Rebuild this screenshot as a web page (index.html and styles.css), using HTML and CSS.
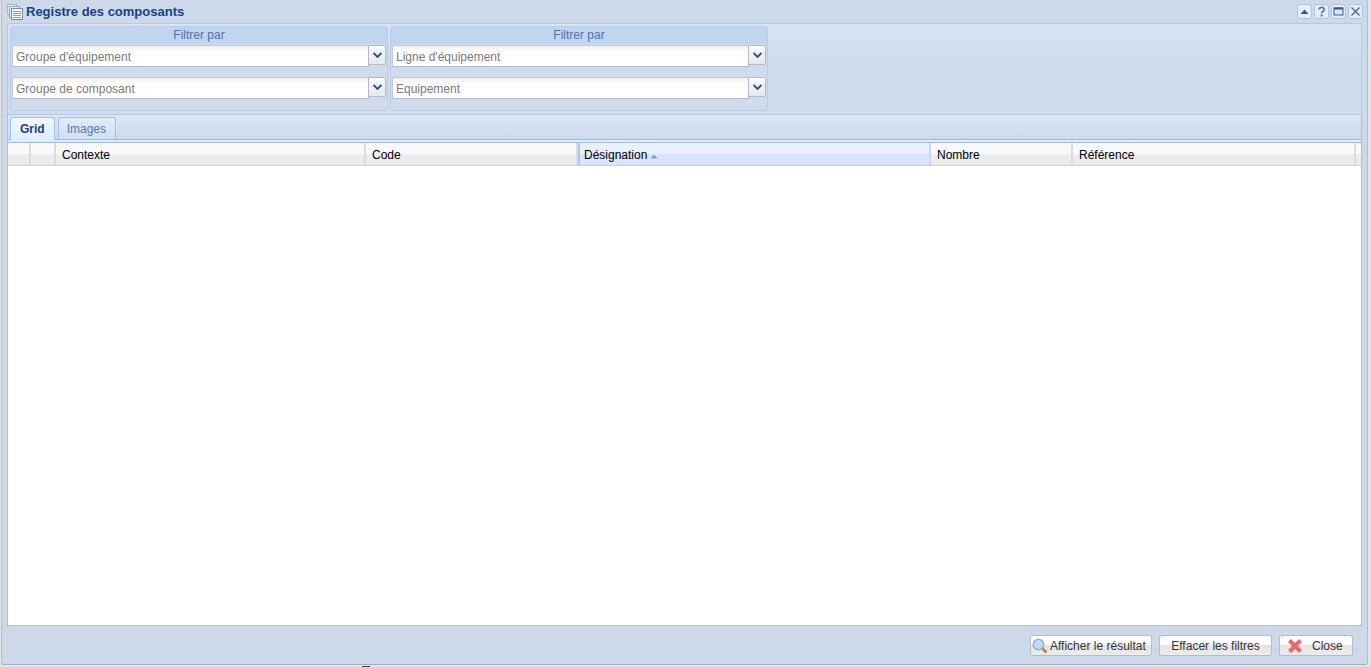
FILE: index.html
```html
<!DOCTYPE html>
<html lang="fr">
<head>
    <meta charset="UTF-8">
    <title>Registre des composants</title>
    <link rel="stylesheet" href="styles.css">
</head>
<body>
    <div class="window">
        <div class="window-title">
            <svg class="title-icon" viewBox="0 0 16 16">
                <rect x="0.5" y="0.5" width="9" height="10" fill="#dbe7f6" stroke="#9fb6d6"/>
                <rect x="2.5" y="2.5" width="10" height="11" fill="#e6eef9" stroke="#8fa9cf"/>
                <rect x="4.5" y="4.5" width="11" height="11" fill="#fff" stroke="#6d8fbd"/>
                <path d="M6 7.5h8M6 9.5h8M6 11.5h8M6 13.5h8" stroke="#7fa0cc"/>
            </svg>
            <span class="title-text">Registre des composants</span>
            <div class="title-tools">
                <button class="tool"><svg viewBox="0 0 13 13"><path d="M2.5 9L6.5 4.5 10.5 9z" fill="#2f55a4"/></svg></button>
                <button class="tool"><svg viewBox="0 0 13 13"><path d="M4 4.5C4 1.7 9.2 1.7 9.2 4.6 9.2 6.4 6.7 6.4 6.7 8.2" fill="none" stroke="#5c7fb5" stroke-width="1.9"/><rect x="5.6" y="9.3" width="2.2" height="2.2" fill="#5c7fb5"/></svg></button>
                <button class="tool"><svg viewBox="0 0 13 13"><rect x="2" y="3" width="9" height="7" fill="#dbe7f6" stroke="#2f55a4"/><path d="M2 3.5h9" stroke="#2f55a4" stroke-width="2"/></svg></button>
                <button class="tool"><svg viewBox="0 0 13 13"><path d="M2.5 2.5l8 8M10.5 2.5l-8 8" stroke="#3f63a8" stroke-width="1.3"/></svg></button>
            </div>
        </div>

        <div class="window-body">
            <div class="filters">
                <div class="filter-group">
                    <div class="filter-title">Filtrer par</div>
                    <div class="combo"><div class="combo-input">Groupe d'équipement</div><div class="combo-btn"><svg viewBox="0 0 9 6"><path d="M0.5 1L4.5 5 8.5 1" fill="none" stroke="#2d4a85" stroke-width="1.8"/></svg></div></div>
                    <div class="combo"><div class="combo-input">Groupe de composant</div><div class="combo-btn"><svg viewBox="0 0 9 6"><path d="M0.5 1L4.5 5 8.5 1" fill="none" stroke="#2d4a85" stroke-width="1.8"/></svg></div></div>
                </div>
                <div class="filter-group">
                    <div class="filter-title">Filtrer par</div>
                    <div class="combo"><div class="combo-input">Ligne d'équipement</div><div class="combo-btn"><svg viewBox="0 0 9 6"><path d="M0.5 1L4.5 5 8.5 1" fill="none" stroke="#2d4a85" stroke-width="1.8"/></svg></div></div>
                    <div class="combo"><div class="combo-input">Equipement</div><div class="combo-btn"><svg viewBox="0 0 9 6"><path d="M0.5 1L4.5 5 8.5 1" fill="none" stroke="#2d4a85" stroke-width="1.8"/></svg></div></div>
                </div>
            </div>

            <div class="tabs-panel">
                <div class="tabs">
                    <div class="tab active">Grid</div>
                    <div class="tab">Images</div>
                </div>
                <div class="tab-strip"></div>
                <div class="grid">
                    <div class="grid-head">
                        <div class="col col-a"></div>
                        <div class="col col-b"></div>
                        <div class="col col-context">Contexte</div>
                        <div class="col col-code">Code</div>
                        <div class="col col-name sorted">Désignation <svg viewBox="0 0 8 5"><path d="M0.5 4.5L4 0.5 7.5 4.5z" fill="#7f9fd0"/></svg></div>
                        <div class="col col-count">Nombre</div>
                        <div class="col col-ref">Référence</div>
                    </div>
                    <div class="grid-rows"></div>
                </div>
            </div>

            <div class="window-footer">
                <button class="btn btn-search">
                    <svg viewBox="0 0 16 16"><circle cx="6.5" cy="6.5" r="5.2" fill="#c4dcf8" stroke="#8fb4e0" stroke-width="1.6"/><path d="M10.5 10.5L14.5 14.5" stroke="#c4873f" stroke-width="2.8"/></svg>
                    Afficher le résultat
                </button>
                <button class="btn btn-plain">Effacer les filtres</button>
                <button class="btn btn-close">
                    <svg viewBox="0 0 16 16"><path d="M2.5 2.5L13.5 13.5M13.5 2.5L2.5 13.5" stroke="#f0646a" stroke-width="4.2"/></svg>
                    Close
                </button>
            </div>
        </div>
    </div>
    <div class="behind"></div>
</body>
</html>
```

FILE: styles.css
```css
* {
    box-sizing: border-box;
}
html, body {
    height: 100%;
}
body {
    position: relative;
    margin: 0;
    font-family: "Liberation Sans", Arial, sans-serif;
    font-size: 12px;
    background-color: #e4e4e4;
    overflow: hidden;
}
.window {
    display: flex;
    flex-direction: column;
    height: 665px;
    width: 1367px;
    margin-left: 1px;
    background-color: #cdd9e8;
    border: 1px solid #a9c0e4;
    border-top: 0;
    border-bottom: 1px solid #9fb0c8;
    border-radius: 0 0 3px 3px;
}
.window-title {
    display: flex;
    align-items: center;
    height: 23px;
    padding: 0 4px 0 5px;
    background: #cdd9e8;
}
.title-icon {
    width: 16px;
    height: 16px;
    margin-right: 3px;
}
.title-text {
    font-size: 13px;
    font-weight: bold;
    color: #15428b;
}
.title-tools {
    display: flex;
    gap: 2px;
    margin-left: auto;
}
.tool {
    width: 15px;
    height: 15px;
    padding: 0;
    border: 1px solid #a8c5ee;
    border-radius: 3px;
    background: #e6eefa;
}
.tool svg {
    display: block;
    width: 13px;
    height: 13px;
}
.window-body {
    flex: 1;
    display: flex;
    flex-direction: column;
    padding: 0 5px;
    min-height: 0;
}
.filters {
    display: flex;
    gap: 2px;
    height: 91px;
    padding: 2px 2px;
    background: linear-gradient(to bottom, #d9e5f5, #cddcee 40%, #cfdcec);
    border: 1px solid #b5c9e4;
    border-bottom: 0;
    border-radius: 3px 3px 0 0;
}
.filter-group {
    width: 378px;
    height: 85px;
    padding: 0 1px;
    background: #cfdcec;
    border: 1px solid #b9cde8;
    border-radius: 3px;
}
.filter-title {
    margin: 0 -1px;
    height: 17px;
    line-height: 16px;
    text-align: center;
    color: #5270ad;
    background: #c0d6ef;
}
.combo {
    display: flex;
    height: 22px;
    margin-top: 1px;
}
.combo + .combo {
    margin-top: 10px;
}
.combo-input {
    flex: 1;
    padding-left: 3px;
    line-height: 22px;
    color: #7a7a7a;
    background: linear-gradient(to bottom, #f0f0f0, #fff 6px);
    border: 1px solid #b5b8c8;
    border-left-color: #c4c8d8;
    border-top-color: #c4c8d8;
}
.combo-btn {
    display: flex;
    align-items: center;
    justify-content: center;
    width: 17px;
    height: 20px;
    background: linear-gradient(to bottom, #fbfbfb, #e6e8ec);
    border: 1px solid #b5b8c8;
    border-left: 0;
    border-radius: 0 2px 2px 0;
}
.combo-btn svg {
    width: 9px;
    height: 6px;
}
.tabs-panel {
    flex: 1;
    display: flex;
    flex-direction: column;
    min-height: 0;
    border: 1px solid #a3c0ea;
    border-top: 0;
}
.tabs {
    display: flex;
    gap: 3px;
    flex: none;
    height: 26px;
    padding: 2px 0 0 2px;
    background: linear-gradient(to bottom, #dae6f6, #cbdbef);
    border-top: 1px solid #b5c9e4;
    border-bottom: 1px solid #99bbe8;
}
.tab {
    height: 22px;
    padding: 0 9px 0 8px;
    line-height: 23px;
    color: #5878a8;
    background: linear-gradient(to bottom, #e2ecf9, #cfdff2);
    border: 1px solid #a3c0ea;
    border-bottom: 0;
    border-radius: 3px 3px 0 0;
}
.tab.active {
    height: 23px;
    padding: 0 9px;
    font-weight: bold;
    color: #15428b;
    background: linear-gradient(to bottom, #f3f8fe, #deecfd);
}
.tab-strip {
    flex: none;
    height: 3px;
    background: #deecfd;
    border-bottom: 1px solid #99bbe8;
}
.grid {
    flex: 1;
    display: flex;
    flex-direction: column;
    min-height: 0;
    background: #fff;
}
.grid-head {
    display: flex;
    height: 23px;
    background: linear-gradient(to bottom, #f9f9f9 50%, #efefef 50%, #e9e9e9);
    border-bottom: 1px solid #d0d0d0;
}
.col {
    display: flex;
    align-items: center;
    gap: 3px;
    padding: 2px 0 0 6px;
    color: #000;
    border-right: 2px solid #dcdcdc;
}
.col svg {
    width: 8px;
    height: 5px;
    margin-top: 2px;
}
.col-a { width: 23px; }
.col-b { width: 25px; }
.col-context { width: 310px; }
.col-code { width: 212px; }
.col-name { width: 353px; }
.col-count { width: 142px; }
.col-ref { width: 283px; }
.sorted {
    background: linear-gradient(to bottom, #e9f2fc 50%, #d6e5f9 50%);
    border-left: 2px solid #a8c6f0;
    padding-left: 4px;
    border-right-color: #c9d8ee;
}
.grid-rows {
    flex: 1;
}
.window-footer {
    display: flex;
    justify-content: flex-end;
    gap: 7px;
    flex: none;
    height: 38px;
    padding: 9px 9px 0 0;
}
.btn {
    display: flex;
    align-items: center;
    justify-content: center;
    height: 21px;
    padding: 0;
    font: inherit;
    color: #333;
    background: linear-gradient(to bottom, #fdfdfd 50%, #e4e4e4 50%, #ececec);
    border: 1px solid #bcbcbc;
    border-radius: 3px;
}
.btn svg {
    width: 16px;
    height: 16px;
}
.btn-search {
    justify-content: flex-start;
    width: 122px;
    padding-left: 1px;
    gap: 2px;
}
.btn-plain {
    width: 113px;
}
.btn-close {
    justify-content: flex-start;
    width: 74px;
    padding-left: 7px;
    gap: 9px;
}
/* bit of the page under the window that shows along the bottom edge */
.behind {
    position: absolute;
    left: 362px;
    bottom: 0;
    width: 8px;
    height: 1px;
    background: #444;
}
```
